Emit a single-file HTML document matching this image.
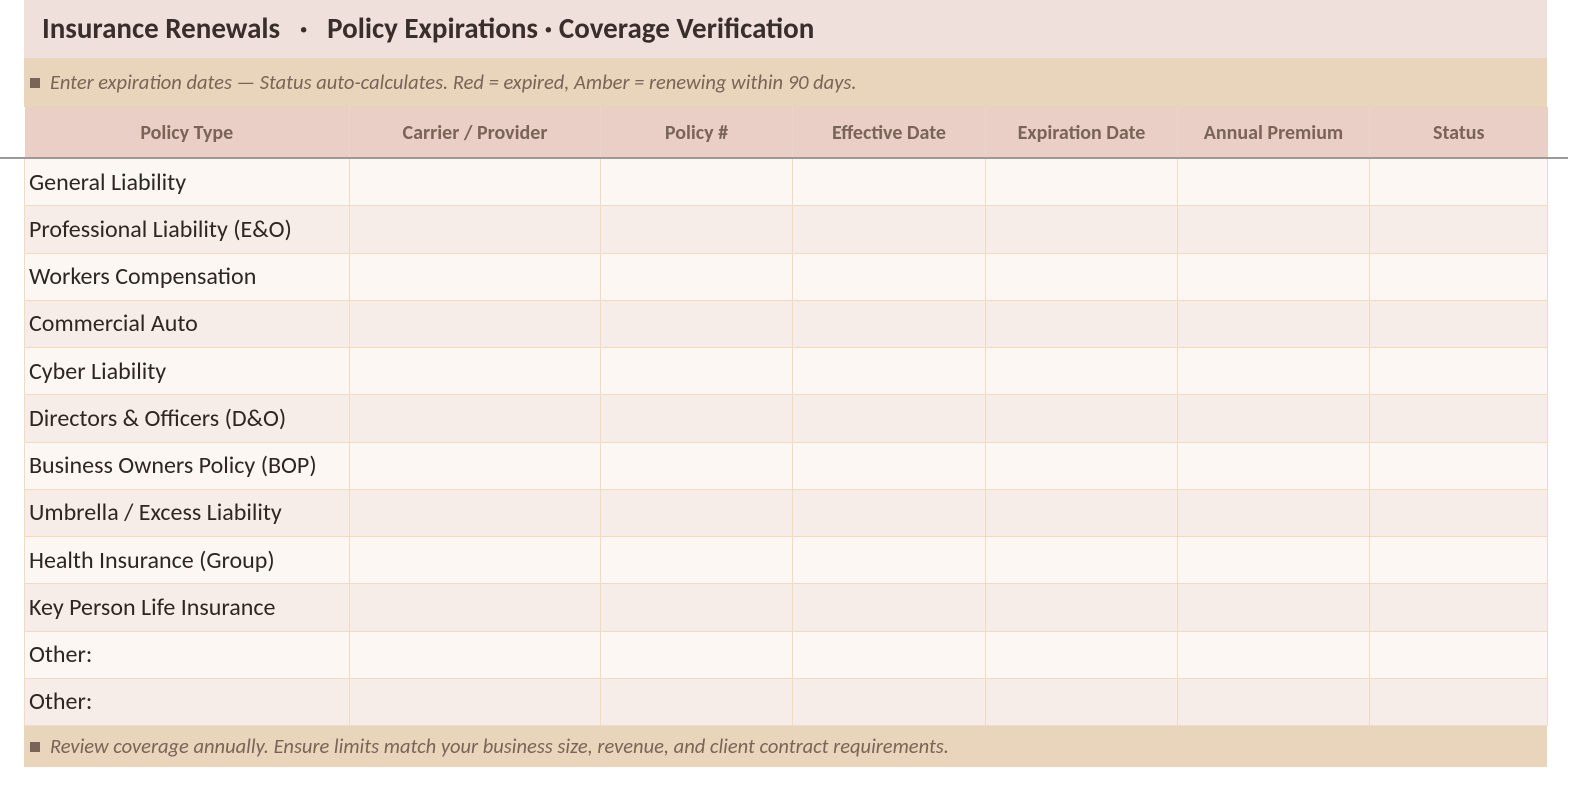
<!DOCTYPE html>
<html><head><meta charset="utf-8"><style>
body{margin:0;background:#fff;width:1591px;height:805px;position:relative;overflow:hidden;font-family:Carlito,"Liberation Sans",sans-serif;}
.abs{position:absolute;box-sizing:border-box}
.title{left:24px;top:0;width:1523px;height:58px;background:#f0e0dc;color:#3a2e2a;font-weight:bold;font-size:29px;line-height:56px;padding-left:18px;white-space:pre}
.note{left:24px;width:1523px;background:#e9d5bb;color:#7a6458;font-style:italic;font-size:20.5px;padding-left:6px;white-space:pre}
.note b{display:inline-block;width:10px;height:10px;background:#7a6458;margin-right:10px;vertical-align:1px}
table{position:absolute;left:24px;top:107px;width:1523px;border-collapse:collapse;table-layout:fixed}
th{height:51px;background:#e9cfc6;color:#7a6458;font-size:20px;font-weight:bold;border-left:1px solid #ead6c7;padding:0}
td{height:47.25px;border:1px solid #f0dcc5;padding:0 0 0 4px;font-size:24px;color:#2e2622;box-sizing:border-box}
tr.o td{background:#fcf7f3}tr.e td{background:#f7ede8}
</style></head><body>
<div class="abs title">Insurance Renewals   ·   Policy Expirations · Coverage Verification</div>
<div class="abs note" style="top:58px;height:49px;line-height:48px"><b></b>Enter expiration dates — Status auto-calculates. Red = expired, Amber = renewing within 90 days.</div>
<table>
<colgroup><col style="width:325px"><col style="width:251px"><col style="width:192px"><col style="width:193px"><col style="width:192px"><col style="width:192px"><col style="width:178px"></colgroup>
<tr><th style="border-left:none">Policy Type</th><th>Carrier / Provider</th><th>Policy #</th><th>Effective Date</th><th>Expiration Date</th><th>Annual Premium</th><th>Status</th></tr>
<tr class="o"><td>General Liability</td><td></td><td></td><td></td><td></td><td></td><td></td></tr>
<tr class="e"><td>Professional Liability (E&amp;O)</td><td></td><td></td><td></td><td></td><td></td><td></td></tr>
<tr class="o"><td>Workers Compensation</td><td></td><td></td><td></td><td></td><td></td><td></td></tr>
<tr class="e"><td>Commercial Auto</td><td></td><td></td><td></td><td></td><td></td><td></td></tr>
<tr class="o"><td>Cyber Liability</td><td></td><td></td><td></td><td></td><td></td><td></td></tr>
<tr class="e"><td>Directors &amp; Officers (D&amp;O)</td><td></td><td></td><td></td><td></td><td></td><td></td></tr>
<tr class="o"><td>Business Owners Policy (BOP)</td><td></td><td></td><td></td><td></td><td></td><td></td></tr>
<tr class="e"><td>Umbrella / Excess Liability</td><td></td><td></td><td></td><td></td><td></td><td></td></tr>
<tr class="o"><td>Health Insurance (Group)</td><td></td><td></td><td></td><td></td><td></td><td></td></tr>
<tr class="e"><td>Key Person Life Insurance</td><td></td><td></td><td></td><td></td><td></td><td></td></tr>
<tr class="o"><td>Other:</td><td></td><td></td><td></td><td></td><td></td><td></td></tr>
<tr class="e"><td>Other:</td><td></td><td></td><td></td><td></td><td></td><td></td></tr>
</table>
<div class="abs" style="left:0;top:157px;width:1568px;height:2px;background:#9a9a9a"></div>
<div class="abs note" style="top:726px;height:41px;line-height:40px"><b></b>Review coverage annually. Ensure limits match your business size, revenue, and client contract requirements.</div>
</body></html>
